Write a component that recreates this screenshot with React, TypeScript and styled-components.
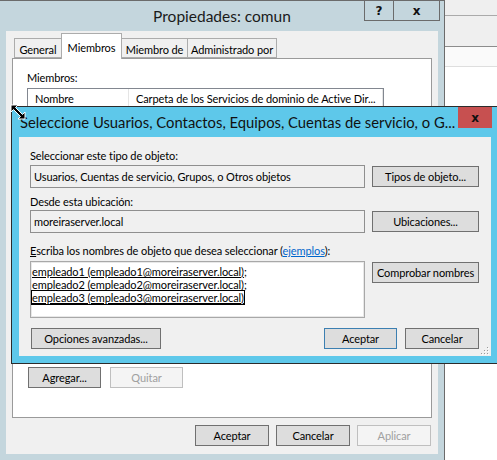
import React from 'react';
import styled, { createGlobalStyle } from 'styled-components';

const FONT = `Lato, "Noto Sans", "Liberation Sans", sans-serif`;

const Global = createGlobalStyle`
  html, body { margin: 0; padding: 0; background: #ffffff; }
  body { font-family: ${FONT}; font-size: 11px; letter-spacing: -0.1px; color: #000; }
  * { box-sizing: border-box; }
`;

const Desktop = styled.div`
  position: relative;
  width: 497px;
  height: 460px;
  overflow: hidden;
  background: #ffffff;
`;

/* window partially visible behind, on the right */
const BackWindow = styled.div`
  position: absolute;
  left: 400px;
  top: 0;
  width: 97px;
  height: 460px;
  display: flex;
  flex-direction: column;
  background: #ffffff;
`;
const BackBand = styled.div<{ $h: number; $bg: string; $line: string }>`
  height: ${(p) => p.$h + 1}px;
  background: ${(p) => p.$bg};
  border-bottom: 1px solid ${(p) => p.$line};
`;

/* ---------- outer "Propiedades" window ---------- */
const OuterWindow = styled.div`
  position: absolute;
  left: -1px;
  top: 0;
  width: 446px;
  border: 1px solid #6b6b6b;
  background: #c4d6dd;
  padding: 0 6px 6px;
  display: flex;
  flex-direction: column;
`;
const OuterTitleBar = styled.div`
  height: 30px;
  display: grid;
  grid-template-columns: 78px 1fr 78px;
  align-items: start;
`;
const OuterTitle = styled.div`
  grid-column: 2;
  height: 30px;
  display: flex;
  align-items: center;
  justify-content: center;
  font-size: 15.5px;
  letter-spacing: 0;
  color: #1a1a1a;
  white-space: nowrap;
`;
const CaptionGroup = styled.div`
  grid-column: 3;
  justify-self: end;
  margin-right: -2px;
  display: flex;
`;
const CaptionButton = styled.div<{ $w: number }>`
  width: ${(p) => p.$w}px;
  height: 20px;
  border: 1px solid #6b6b6b;
  border-top: none;
  & + & { margin-left: -1px; }
  display: flex;
  align-items: center;
  justify-content: center;
  font-family: "DejaVu Sans", sans-serif;
  font-weight: bold;
  font-size: 12px;
  letter-spacing: 0;
  color: #111;
`;
const OuterClient = styled.div`
  height: 423px;
  background: #f0f0f0;
  padding: 2px 6px 0;
  display: flex;
  flex-direction: column;
`;
const TabStrip = styled.div`
  height: 26px;
  margin-bottom: -1px;
  padding-left: 2px;
  display: flex;
  align-items: flex-end;
  position: relative;
  z-index: 1;
`;
const Tab = styled.div<{ $w: number; $active?: boolean }>`
  width: ${(p) => p.$w}px;
  height: ${(p) => (p.$active ? 26 : 20)}px;
  margin-bottom: ${(p) => (p.$active ? 0 : 1)}px;
  padding-top: ${(p) => (p.$active ? 2 : 3)}px;
  background: ${(p) => (p.$active ? '#ffffff' : '#f0f0f0')};
  border: 1px solid #acacac;
  border-bottom: ${(p) => (p.$active ? 'none' : '1px solid #acacac')};
  & + & { margin-left: -1px; }
  display: flex;
  align-items: center;
  justify-content: center;
  white-space: nowrap;
`;
const TabPanel = styled.div`
  height: 360px;
  background: #ffffff;
  border: 1px solid #9a9a9a;
  padding: 11px 0 0 14px;
  display: flex;
  flex-direction: column;
`;
const PanelLabel = styled.div`
  line-height: 15px;
`;
const ListBox = styled.div`
  margin-top: 3px;
  width: 357px;
  height: 271px;
  border: 1px solid #828790;
  background: #ffffff;
`;
const ListHeader = styled.div`
  height: 19px;
  display: flex;
`;
const HeaderCell = styled.div<{ $w?: number }>`
  ${(p) => (p.$w ? `width: ${p.$w}px;` : 'flex: 1;')}
  padding-left: 7px;
  display: flex;
  align-items: center;
  border-right: 1px solid #e5e5e5;
  white-space: nowrap;
  overflow: hidden;
`;
const ButtonRow = styled.div<{ $gap: number; $mt: number }>`
  display: flex;
  gap: ${(p) => p.$gap}px;
  margin-top: ${(p) => p.$mt}px;
`;
const WinButton = styled.div<{ $w: number; $disabled?: boolean; $default?: boolean }>`
  width: ${(p) => p.$w}px;
  height: 21px;
  flex: none;
  display: flex;
  align-items: center;
  justify-content: center;
  white-space: nowrap;
  background: ${(p) => (p.$disabled ? '#f4f4f4' : '#dddddd')};
  border: 1px solid ${(p) => (p.$disabled ? '#bfbfbf' : p.$default ? '#3c7fb1' : '#707070')};
  color: ${(p) => (p.$disabled ? '#a0a0a0' : '#000')};
`;
const BottomRow = styled.div`
  margin-top: 7px;
  margin-right: 1px;
  display: flex;
  justify-content: flex-end;
  gap: 7px;
`;

/* ---------- inner "Seleccione" dialog ---------- */
const InnerWindow = styled.div`
  position: absolute;
  left: 11px;
  top: 106px;
  width: 488px;
  border: 1px solid #2b2b2b;
  background: #5ec8ea;
  padding: 0 7px 7px;
  display: flex;
  flex-direction: column;
`;
const InnerTitleBar = styled.div`
  height: 30px;
  display: flex;
  align-items: flex-start;
`;
const InnerTitle = styled.div`
  flex: 1;
  height: 30px;
  padding-left: 1px;
  display: flex;
  align-items: center;
  font-size: 14.8px;
  letter-spacing: 0;
  color: #111;
  white-space: nowrap;
  overflow: hidden;
`;
const CloseButton = styled.div`
  width: 34px;
  height: 21px;
  margin-right: -1px;
  background: #c75050;
  display: flex;
  align-items: center;
  justify-content: center;
  font-family: "DejaVu Sans", sans-serif;
  font-weight: bold;
  font-size: 12px;
  letter-spacing: 0;
  color: #111;
`;
const InnerClient = styled.div`
  position: relative;
  background: #f0f0f0;
  padding: 11px 12px 7px 11px;
  display: flex;
  flex-direction: column;
`;
const FieldLabel = styled.div<{ $mt: number }>`
  margin-top: ${(p) => p.$mt}px;
  line-height: 15px;
  white-space: nowrap;
`;
const FieldRow = styled.div<{ $mt: number; $top?: boolean }>`
  margin-top: ${(p) => p.$mt}px;
  display: flex;
  gap: 7px;
  align-items: ${(p) => (p.$top ? 'flex-start' : 'center')};
`;
const ReadOnlyBox = styled.div`
  width: 335px;
  height: 23px;
  flex: none;
  border: 1px solid #8f8f8f;
  background: #f0f0f0;
  padding-left: 3px;
  display: flex;
  align-items: center;
  white-space: nowrap;
`;
const NamesBox = styled.div`
  width: 335px;
  height: 57px;
  flex: none;
  border: 1px solid #a8a8a8;
  box-shadow: inset 0 0 0 1px #e8e8e8;
  background: #ffffff;
  padding: 3px 1px;
  display: flex;
  flex-direction: column;
`;
const NameLine = styled.div`
  height: 13px;
  line-height: 13px;
  white-space: nowrap;
`;
const Resolved = styled.span<{ $focus?: boolean }>`
  text-decoration: underline;
  outline: ${(p) => (p.$focus ? '1px solid #000' : 'none')};
  outline-offset: 0px;
`;
const Link = styled.span`
  color: #0066cc;
  text-decoration: underline;
`;
const Accel = styled.span`
  text-decoration: underline;
`;
const Footer = styled.div`
  margin-top: 10px;
  display: flex;
  align-items: center;
  gap: 8px;
`;
const Spacer = styled.div`
  flex: 1;
`;
const OffsetButton = styled(WinButton)`
  margin-left: 1px;
`;
const CheckButton = styled(WinButton)`
  margin-top: 1px;
`;
const Grip = styled.svg`
  position: absolute;
  right: 2px;
  bottom: 1px;
`;
const Cursor = styled.svg`
  position: absolute;
  left: 10px;
  top: 104px;
`;

const gripDots = [
  [7, 1],
  [4, 4],
  [7, 4],
  [1, 7],
  [4, 7],
  [7, 7],
];

export default function App() {
  return (
    <>
      <Global />
      <Desktop>
        <BackWindow>
          <BackBand $h={15} $bg="#efefef" $line="#aaaaaa" />
          <BackBand $h={30} $bg="#efefef" $line="#8c8c8c" />
          <BackBand $h={19} $bg="#fafafa" $line="#dedede" />
        </BackWindow>

        <OuterWindow>
          <OuterTitleBar>
            <OuterTitle>Propiedades: comun</OuterTitle>
            <CaptionGroup>
              <CaptionButton $w={30}>?</CaptionButton>
              <CaptionButton $w={47}>x</CaptionButton>
            </CaptionGroup>
          </OuterTitleBar>
          <OuterClient>
            <TabStrip>
              <Tab $w={48}>General</Tab>
              <Tab $w={61} $active>Miembros</Tab>
              <Tab $w={67}>Miembro de</Tab>
              <Tab $w={90}>Administrado por</Tab>
            </TabStrip>
            <TabPanel>
              <PanelLabel>Miembros:</PanelLabel>
              <ListBox>
                <ListHeader>
                  <HeaderCell $w={101}>Nombre</HeaderCell>
                  <HeaderCell>Carpeta de los Servicios de dominio de Active Dir...</HeaderCell>
                </ListHeader>
              </ListBox>
              <ButtonRow $gap={9} $mt={8}>
                <OffsetButton $w={73}>Agregar...</OffsetButton>
                <WinButton $w={73} $disabled>Quitar</WinButton>
              </ButtonRow>
            </TabPanel>
            <BottomRow>
              <WinButton $w={74}>Aceptar</WinButton>
              <WinButton $w={74}>Cancelar</WinButton>
              <WinButton $w={74} $disabled>Aplicar</WinButton>
            </BottomRow>
          </OuterClient>
        </OuterWindow>

        <InnerWindow>
          <InnerTitleBar>
            <InnerTitle>Seleccione Usuarios, Contactos, Equipos, Cuentas de servicio, o G...</InnerTitle>
            <CloseButton>x</CloseButton>
          </InnerTitleBar>
          <InnerClient>
            <FieldLabel $mt={0}>Seleccionar este tipo de objeto:</FieldLabel>
            <FieldRow $mt={2}>
              <ReadOnlyBox>Usuarios, Cuentas de servicio, Grupos, o Otros objetos</ReadOnlyBox>
              <WinButton $w={107}>Tipos de objeto...</WinButton>
            </FieldRow>
            <FieldLabel $mt={6}>Desde esta ubicación:</FieldLabel>
            <FieldRow $mt={1}>
              <ReadOnlyBox>moreiraserver.local</ReadOnlyBox>
              <WinButton $w={107}>Ubicaciones...</WinButton>
            </FieldRow>
            <FieldLabel $mt={10}>
              <Accel>E</Accel>scriba los nombres de objeto que desea seleccionar (<Link>ejemplos</Link>):
            </FieldLabel>
            <FieldRow $mt={3} $top>
              <NamesBox>
                <NameLine>
                  <Resolved>empleado1 (empleado1@moreiraserver.local)</Resolved>;
                </NameLine>
                <NameLine>
                  <Resolved>empleado2 (empleado2@moreiraserver.local)</Resolved>;
                </NameLine>
                <NameLine>
                  <Resolved $focus>empleado3 (empleado3@moreiraserver.local)</Resolved>
                </NameLine>
              </NamesBox>
              <CheckButton $w={107}>Comprobar nombres</CheckButton>
            </FieldRow>
            <Footer>
              <OffsetButton $w={130}>Opciones avanzadas...</OffsetButton>
              <Spacer />
              <WinButton $w={73} $default>Aceptar</WinButton>
              <WinButton $w={74}>Cancelar</WinButton>
            </Footer>
            <Grip width="9" height="9" viewBox="0 0 9 9">
              {gripDots.map(([x, y]) => (
                <g key={`${x}-${y}`}>
                  <rect x={x + 1} y={y + 1} width="1" height="1" fill="#ffffff" />
                  <rect x={x} y={y} width="1" height="1" fill="#9a9a9a" />
                </g>
              ))}
            </Grip>
          </InnerClient>
        </InnerWindow>

        <Cursor width="16" height="16" viewBox="0 0 16 16">
          <path
            d="M1 1 L8 1 L5.5 3.5 L12.5 10.5 L15 8 L15 15 L8 15 L10.5 12.5 L3.5 5.5 L1 8 Z"
            fill="#000"
            stroke="#fff"
            strokeWidth="1"
            strokeLinejoin="miter"
          />
        </Cursor>
      </Desktop>
    </>
  );
}
